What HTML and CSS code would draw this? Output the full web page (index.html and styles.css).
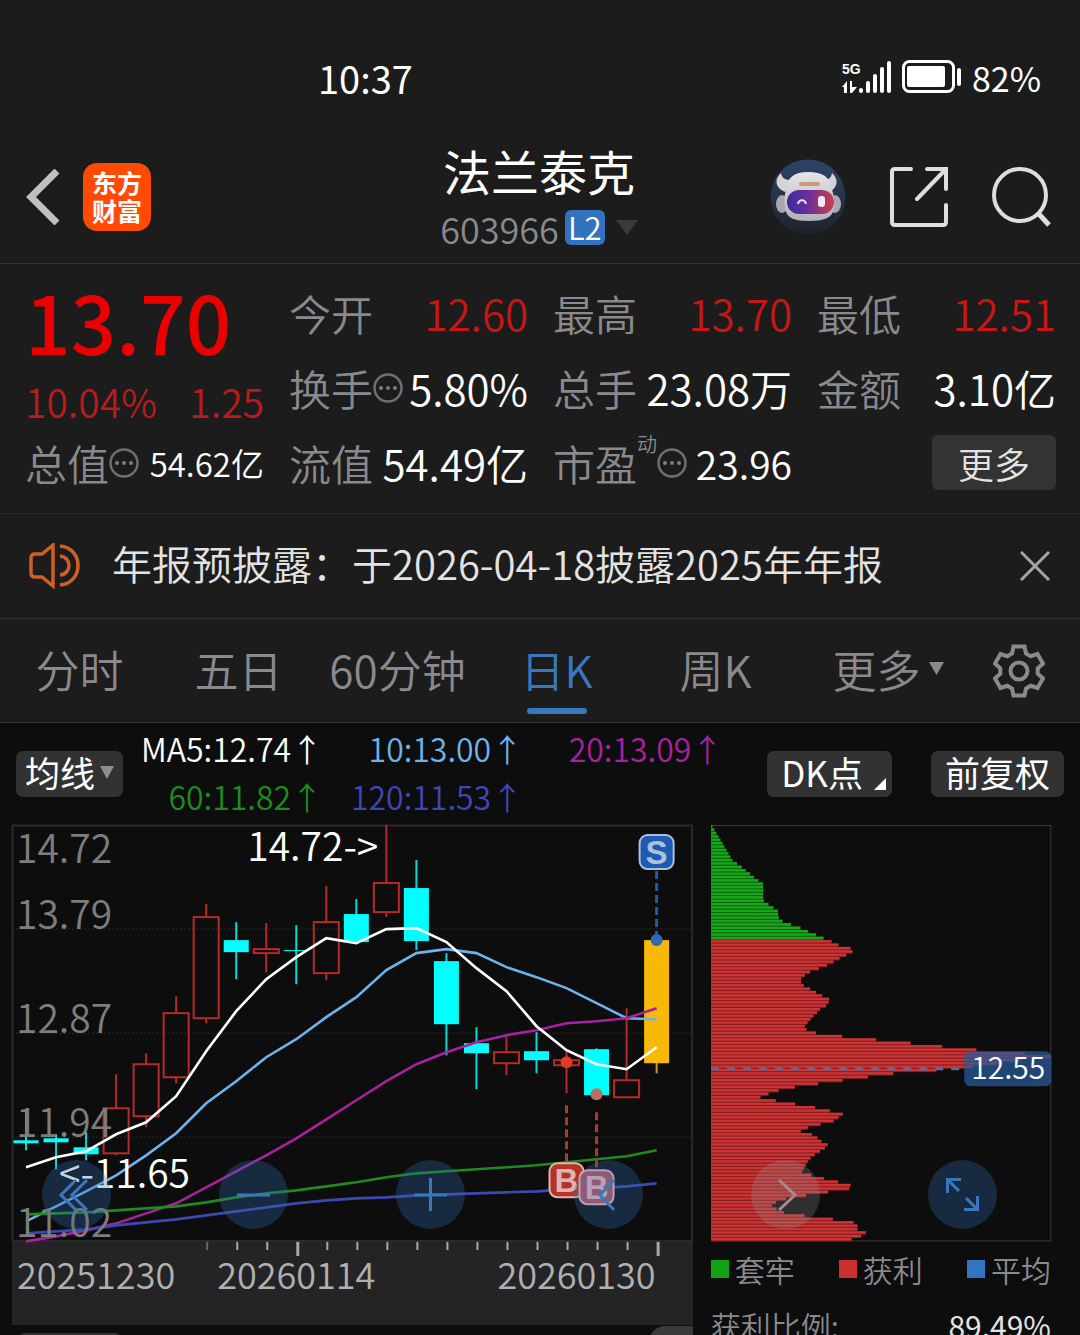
FILE: index.html
```html
<!DOCTYPE html>
<html lang="zh-CN">
<head>
    <meta charset="UTF-8">
    <meta name="viewport" content="width=device-width, initial-scale=1.0">
    <title>法兰泰克 603966</title>
    <link rel="stylesheet" href="styles.css">
</head>
<body>
    <div class="status-bar">
        <span class="time">10:37</span>
        <div class="status-icons">
            <svg width="50" height="34" viewBox="0 0 50 34" fill="#fff">
                <text x="0" y="14" class="net-label">5G</text>
                <path d="M0 27l5-6v12H2v-6zM8 21h2v6h5l-5 6H8z"/>
                <rect x="17" y="28" width="4" height="5" rx="2"/>
                <rect x="24" y="21" width="4" height="12" rx="2"/>
                <rect x="31" y="14" width="4" height="19" rx="2"/>
                <rect x="38" y="7" width="4" height="26" rx="2"/>
                <rect x="45" y="1" width="4" height="32" rx="2"/>
            </svg>
            <svg width="60" height="34" viewBox="0 0 60 34">
                <rect x="1.5" y="1.5" width="50" height="30" rx="6" fill="none" stroke="#fff" stroke-width="3"/>
                <rect x="5" y="6" width="38" height="21" rx="2" fill="#fff"/>
                <rect x="55" y="8" width="4" height="18" rx="2" fill="#fff"/>
            </svg>
            <span class="battery">82%</span>
        </div>
    </div>

    <div class="header">
        <div class="header-left">
            <button class="icon-button" aria-label="返回">
                <svg width="34" height="56" viewBox="0 0 34 56" fill="none" stroke="#c0c0c0" stroke-width="7">
                    <path d="M31 2L5 28l26 26"/>
                </svg>
            </button>
            <a class="logo" href="#">东方<br>财富</a>
        </div>
        <div class="title">
            <h1>法兰泰克</h1>
            <button class="code">
                603966<span class="badge">L2</span>
                <svg width="22" height="16" viewBox="0 0 22 16"><path d="M0 0h22L11 15z" fill="#3a3a3a"/></svg>
            </button>
        </div>
        <div class="header-right">
            <button class="icon-button" aria-label="助手">
                <svg width="76" height="76" viewBox="0 0 76 76">
                    <defs>
                        <linearGradient id="disc" x1="0" y1="0" x2="0" y2="1">
                            <stop offset="0" stop-color="#2f4468"/>
                            <stop offset="1" stop-color="#1f222b"/>
                        </linearGradient>
                        <linearGradient id="visor" x1="0" y1="0" x2="1" y2="0">
                            <stop offset="0" stop-color="#3b2c9c"/>
                            <stop offset="0.45" stop-color="#6a2f9c"/>
                            <stop offset="1" stop-color="#c9404e"/>
                        </linearGradient>
                        <linearGradient id="shell" x1="0" y1="0" x2="0" y2="1">
                            <stop offset="0" stop-color="#e6e4e8"/>
                            <stop offset="1" stop-color="#b4b0b8"/>
                        </linearGradient>
                    </defs>
                    <circle cx="38" cy="38" r="37.5" fill="url(#disc)"/>
                    <path d="M11 14c-7 6-6 15 4 19l8-13c-6 2-11 0-12-6zM62 14c7 6 6 15-3 19l-8-13c6 2 10 0 11-6z" fill="#d5d3d8"/>
                    <ellipse cx="12" cy="45" rx="6" ry="9" fill="#aaa7b0"/>
                    <ellipse cx="65" cy="45" rx="6" ry="9" fill="#aaa7b0"/>
                    <path d="M38 13c-14 0-20 5-22 17-2 8-2 14-1 20 2 9 9 12 24 12s23-3 25-12c1-6 0-12-2-20-2-12-9-17-24-17z" fill="url(#shell)"/>
                    <rect x="29" y="23" width="21" height="4" rx="2" fill="#c99b72"/>
                    <rect x="17" y="31" width="47" height="24" rx="12" fill="url(#visor)"/>
                    <path d="M28 45c1-5 7-5 8 0" fill="none" stroke="#dfe3ff" stroke-width="2"/>
                    <rect x="48" y="37" width="7" height="11" rx="3" fill="#f3e6f2"/>
                </svg>
            </button>
            <button class="icon-button" aria-label="分享">
                <svg width="58" height="60" viewBox="0 0 58 60" fill="none" stroke="#dedede" stroke-width="4" stroke-linecap="round">
                    <path d="M21 2H5q-3 0-3 3v50q0 3 3 3h48q3 0 3-3V38M37 2h19v20M56 2L27 32"/>
                </svg>
            </button>
            <button class="icon-button" aria-label="搜索">
                <svg width="60" height="62" viewBox="0 0 60 62" fill="none" stroke="#dedede" stroke-width="4">
                    <circle cx="28" cy="29" r="26"/>
                    <path d="M46 47l11 12" stroke-width="5"/>
                </svg>
            </button>
        </div>
    </div>

    <div class="quote">
        <div class="price">
            <div class="price-now">13.70</div>
            <div class="price-change"><span>10.04%</span><span>1.25</span></div>
        </div>
        <div class="cell"><span class="label">今开</span><span class="value up">12.60</span></div>
        <div class="cell"><span class="label">最高</span><span class="value up">13.70</span></div>
        <div class="cell"><span class="label">最低</span><span class="value up">12.51</span></div>
        <div class="cell"><span class="label">换手<svg class="info" viewBox="0 0 30 30"><use href="#dots"/></svg></span><span class="value">5.80%</span></div>
        <div class="cell"><span class="label">总手</span><span class="value">23.08万</span></div>
        <div class="cell"><span class="label">金额</span><span class="value">3.10亿</span></div>
        <div class="cell"><span class="label">总值<svg class="info" viewBox="0 0 30 30"><use href="#dots"/></svg></span><span class="value small">54.62亿</span></div>
        <div class="cell"><span class="label">流值</span><span class="value">54.49亿</span></div>
        <div class="cell"><span class="label">市盈<sup>动</sup><svg class="info" viewBox="0 0 30 30"><use href="#dots"/></svg></span><span class="value medium">23.96</span></div>
        <div class="cell cell-more"><button class="more">更多</button></div>
    </div>

    <div class="notice">
        <svg width="52" height="46" viewBox="0 0 52 46" fill="none" stroke="#cf5f22" stroke-width="3.5">
            <path d="M24 2v41L13 34H6q-4 0-4-4V15q0-4 4-4h7z"/>
            <path d="M31 3c24 2 24 37 0 39M31 13c12 1 12 18 0 19"/>
        </svg>
        <p>年报预披露：于2026-04-18披露2025年年报</p>
        <button class="icon-button" aria-label="关闭">
            <svg width="30" height="30" viewBox="0 0 30 30" stroke="#a5a5a5" stroke-width="3"><path d="M1 1l28 28M29 1L1 29"/></svg>
        </button>
    </div>

    <div class="tabs">
        <button class="tab">分时</button>
        <button class="tab">五日</button>
        <button class="tab">60分钟</button>
        <button class="tab active">日K</button>
        <button class="tab">周K</button>
        <button class="tab">更多<svg width="15" height="13" viewBox="0 0 15 13"><path d="M0 0h15L7.5 13z" fill="#8a898e"/></svg></button>
        <button class="settings" aria-label="设置">
            <svg width="52" height="54" viewBox="-26 -27 52 54" fill="none" stroke="#8a898e" stroke-width="4">
                <path d="M-5.500-24.500H5.500L7-17.500 11.700-14.800 18.500-17 24-7.500 18.700-2.700V2.700L24 7.500 18.500 17 11.700 14.800 7 17.500 5.500 24.500H-5.500L-7 17.500-11.700 14.800-18.500 17-24 7.500-18.700 2.700V-2.700L-24-7.500-18.500-17-11.700-14.800-7-17.500z"/>
                <circle r="8.500"/>
            </svg>
        </button>
    </div>

    <div class="toolbar">
        <button class="tool tool-ma">均线<svg width="14" height="13" viewBox="0 0 14 13"><path d="M0 0h14L7 13z" fill="#8e8e8e"/></svg></button>
        <div class="ma-list">
            <span class="ma5">MA5:12.74↑</span>
            <span class="ma10">10:13.00↑</span>
            <span class="ma20">20:13.09↑</span>
            <span class="ma60">60:11.82↑</span>
            <span class="ma120">120:11.53↑</span>
        </div>
        <button class="tool tool-dk">DK点<svg width="12" height="12" viewBox="0 0 12 12"><path d="M12 0v12H0z" fill="#fff"/></svg></button>
        <button class="tool">前复权</button>
    </div>

    <div class="charts">
        <div class="kline">
            <div class="plot">
                <svg id="kline" class="chart" viewBox="0 0 680 416"></svg>
                <div class="plot-buttons">
                    <button class="round" aria-label="快退"><svg viewBox="0 0 69 69"><path d="M34 20L19 35l15 15M45 20L30 35l15 15"/></svg></button>
                    <button class="round" aria-label="缩小"><svg viewBox="0 0 69 69"><path d="M18 35h33"/></svg></button>
                    <button class="round" aria-label="放大"><svg viewBox="0 0 69 69"><path d="M18 35h33M34.500 18v33"/></svg></button>
                    <button class="round" aria-label="后退"><svg viewBox="0 0 69 69"><path d="M40 20L26 35l14 15"/></svg></button>
                </div>
            </div>
            <svg id="axis" class="chart axis" viewBox="0 0 680 84"></svg>
            <div class="next-row"><div class="chip"></div><div class="chip-right"></div></div>
        </div>
        <div class="chips">
            <div class="plot">
                <svg id="chips" class="chart" viewBox="0 0 340 416"></svg>
                <div class="plot-buttons">
                    <button class="round gray" aria-label="前进"><svg viewBox="0 0 69 69"><path d="M28 20l16 15-16 15"/></svg></button>
                    <button class="round" aria-label="全屏"><svg viewBox="0 0 69 69"><path d="M19.500 33V19.500H33M20 20l11 11M49.500 36v13.500H36M49 49L38 38"/></svg></button>
                </div>
            </div>
            <div class="legend">
                <span><i class="green"></i>套牢</span>
                <span><i class="red"></i>获利</span>
                <span><i class="blue"></i>平均</span>
            </div>
            <div class="stat"><span>获利比例:</span><b>89.49%</b></div>
        </div>
    </div>

    <svg class="defs">
        <symbol id="dots" viewBox="0 0 30 30">
            <circle cx="15" cy="15" r="13.500" fill="none" stroke="#6f6f72" stroke-width="2.500"/>
            <g fill="#7c7c80"><circle cx="8" cy="15" r="2"/><circle cx="15" cy="15" r="2"/><circle cx="22" cy="15" r="2"/></g>
        </symbol>
    </svg>
    <script src="script.js"></script>
</body>
</html>
```

FILE: styles.css
```css
* {
    box-sizing: border-box;
}
body {
    margin: 0;
    height: 100vh;
    overflow: hidden;
    display: flex;
    flex-direction: column;
    background-color: #1c1c1c;
    color: #fff;
    font-family: "Noto Sans CJK SC", sans-serif;
    font-weight: 350;
}
button {
    font: inherit;
    color: inherit;
    background: none;
    border: none;
    padding: 0;
    cursor: pointer;
}
svg {
    display: block;
    flex: none;
}
.defs {
    position: absolute;
    width: 0;
    height: 0;
}
.status-bar {
    flex: none;
    height: 130px;
    padding: 24px 39px 0 318px;
    display: flex;
    justify-content: space-between;
    align-items: center;
    font-weight: 400;
}
.time {
    font-size: 38px;
}
.status-icons {
    display: flex;
    align-items: center;
    gap: 10px;
}
.status-icons svg {
    overflow: visible;
}
.net-label {
    font: bold 14px "Liberation Sans", sans-serif;
}
.battery {
    font-size: 34px;
}
.header {
    flex: none;
    height: 134px;
    padding: 0 28px 0 26px;
    display: grid;
    grid-template-columns: 1fr auto 1fr;
    align-items: center;
    border-bottom: 1px solid #333;
}
.header-left,
.header-right {
    display: flex;
    align-items: center;
}
.header-left {
    gap: 23px;
}
.header-right {
    justify-content: flex-end;
    gap: 44px;
}
.logo {
    width: 68px;
    height: 68px;
    padding-top: 5px;
    border-radius: 14px;
    background-color: #ff4a05;
    color: #fff;
    text-align: center;
    font-size: 25px;
    line-height: 28px;
    font-weight: 700;
    text-decoration: none;
}
.title {
    padding-top: 4px;
    text-align: center;
}
.title h1 {
    margin: 0;
    font-size: 48px;
    line-height: 58px;
    font-weight: 400;
}
.code {
    display: flex;
    align-items: center;
    height: 58px;
    color: #8a898e;
    font-size: 36px;
}
.badge {
    width: 40px;
    height: 35px;
    margin: 0 11px 0 6px;
    border-radius: 6px;
    background-color: #3273bf;
    color: #fff;
    font-size: 31px;
    line-height: 34px;
}
.quote {
    flex: none;
    padding: 11px 24px 13px 25px;
    display: grid;
    grid-template-columns: repeat(4, minmax(0, 1fr));
    grid-auto-rows: 75px;
    column-gap: 25px;
    border-bottom: 1px solid #2b2b2b;
}
.price {
    grid-row: span 2;
    color: #eb0000;
}
.price-now {
    font-size: 80px;
    line-height: 90px;
    font-weight: 500;
}
.price-change {
    display: flex;
    justify-content: space-between;
    color: #b91a1a;
    font-size: 39px;
    line-height: 72px;
}
.cell {
    display: flex;
    justify-content: space-between;
    align-items: center;
    white-space: nowrap;
    font-size: 42px;
}
.label {
    display: flex;
    align-items: center;
    color: #8a898e;
}
.label sup {
    align-self: flex-start;
    font-size: 20px;
    line-height: 24px;
}
.info {
    width: 30px;
    height: 30px;
}
.value.up {
    color: #c41717;
}
.value.medium {
    font-size: 39px;
}
.value.small {
    font-size: 33px;
}
.cell-more {
    justify-content: flex-end;
}
.more {
    width: 124px;
    height: 55px;
    border-radius: 6px;
    background-color: #333;
    color: #e3e3e3;
    font-size: 36px;
    line-height: 50px;
}
.notice {
    flex: none;
    height: 105px;
    padding: 0 30px 0 29px;
    display: flex;
    align-items: center;
    gap: 31px;
    border-bottom: 1px solid #333;
}
.notice p {
    flex: 1;
    margin: 0;
    padding-bottom: 6px;
    color: #e3e3e3;
    font-size: 40px;
}
.tabs {
    flex: none;
    height: 104px;
    display: grid;
    grid-template-columns: repeat(5, 159fr) 186fr 99fr;
    border-bottom: 1px solid #333;
}
.tab {
    display: flex;
    align-items: center;
    justify-content: center;
    gap: 8px;
    position: relative;
    padding-bottom: 4px;
    color: #8a898e;
    font-size: 44px;
}
.tab.active {
    color: #3a78bd;
}
.tab.active::after {
    content: "";
    position: absolute;
    bottom: 8px;
    width: 60px;
    height: 6px;
    border-radius: 3px;
    background-color: #3a78bd;
}
.settings {
    padding-left: 12px;
}
.toolbar {
    flex: none;
    height: 102px;
    padding: 0 16px;
    display: flex;
    align-items: center;
    background-color: #0d0d0d;
}
.tool {
    display: flex;
    align-items: center;
    height: 46px;
    padding: 0 14px 4px;
    border-radius: 7px;
    background-color: #323232;
    font-size: 35px;
    line-height: 42px;
    font-weight: 400;
}
.tool-ma {
    padding: 0 9px 4px;
    gap: 5px;
}
.tool-dk {
    margin-right: 39px;
    padding-right: 6px;
    gap: 11px;
}
.tool-dk svg {
    align-self: flex-end;
    margin-bottom: 3px;
}
.ma-list {
    flex: 1;
    margin-right: 44px;
    padding-bottom: 4px;
    display: grid;
    grid-template-columns: repeat(3, 1fr);
    justify-items: end;
    font-size: 32px;
    line-height: 48px;
    white-space: nowrap;
}
.ma10 {
    color: #6cb3ec;
}
.ma20 {
    color: #a8219f;
}
.ma60 {
    color: #1f8a1f;
}
.ma120 {
    color: #3d48b3;
}
.charts {
    flex: 1;
    padding: 0 29px 0 12px;
    display: grid;
    grid-template-columns: 2fr 1fr;
    align-items: start;
    column-gap: 18px;
    background-color: #0d0d0d;
}
.plot {
    position: relative;
}
.chart {
    width: 100%;
    height: auto;
    overflow: visible;
}
.axis {
    background-color: #242426;
}
.chart text {
    font-size: 39px;
}
.chart .date {
    fill: #b0b0b0;
    font-size: 36px;
}
.chart .scale {
    fill: #7d7d7d;
}
.chart .mark {
    font: bold 33px "Liberation Sans", sans-serif;
    text-anchor: middle;
}
.chart .tag {
    fill: #fff;
    font-size: 30px;
    text-anchor: middle;
}
.plot-buttons {
    position: absolute;
    left: 30px;
    right: 50px;
    bottom: 12px;
    display: flex;
    justify-content: space-between;
}
.chips .plot-buttons {
    left: 40px;
    right: 54px;
}
.round {
    width: 69px;
    height: 69px;
    border-radius: 50%;
    background-color: rgba(50, 110, 180, 0.3);
}
.round svg {
    fill: none;
    stroke: #3a78bd;
    stroke-width: 3;
}
.round.gray {
    background-color: rgba(150, 150, 150, 0.25);
}
.round.gray svg {
    stroke: #a08e8e;
}
.next-row {
    display: flex;
    justify-content: space-between;
    align-items: flex-start;
    padding: 1px 0 0 6px;
}
.chip {
    width: 104px;
    height: 46px;
    margin-top: 7px;
    border-radius: 7px;
    background-color: #323232;
}
.chip-right {
    width: 44px;
    height: 60px;
    border-radius: 16px 0 0 0;
    background-color: #3a3a3a;
}
.legend,
.stat {
    display: flex;
    justify-content: space-between;
    align-items: center;
    color: #8a898e;
    font-size: 30px;
    line-height: 56px;
}
.legend span {
    display: flex;
    align-items: center;
    gap: 6px;
}
.legend i {
    width: 18px;
    height: 18px;
}
.green {
    background-color: #12a312;
}
.red {
    background-color: #cb3030;
}
.blue {
    background-color: #3174c2;
}
.stat b {
    color: #e3e3e3;
    font-weight: 400;
}
```

FILE: script.js
```javascript
const STEP = 30;
const FIRST = 14;

// [high, body top, body bottom, low, kind] in chart units
const candles = [
    [287, 315, 318, 325, 'down'], [309, 313, 317, 344, 'down'], [307, 322, 329, 335, 'down'],
    [249, 283, 328, 330, 'up'], [228, 239, 291, 302, 'up'], [171, 188, 252, 258, 'up'],
    [79, 92, 193, 198, 'up'], [97, 115, 127, 154, 'down'], [98, 124, 128, 147, 'up'],
    [100, 125, 126, 159, 'down'], [61, 97, 148, 155, 'up'], [74, 89, 117, 117, 'down'],
    [0, 58, 87, 92, 'up'], [35, 63, 116, 125, 'down'], [128, 136, 199, 230, 'down'],
    [202, 218, 228, 264, 'down'], [211, 227, 238, 250, 'up'], [207, 226, 235, 248, 'down'],
    [225, 235, 240, 268, 'up'], [223, 224, 270, 274, 'down'], [183, 255, 272, 273, 'up'],
    [115, 115, 238, 248, 'limit']
];

const lines = [
    ['#6cb3ec', [396, 381, 366, 350, 330, 308, 278, 256, 232, 214, 192, 172, 145, 128, 124, 128, 142, 152, 163, 178, 193, 194]],
    ['#a8219f', [416, 411, 405, 398, 388, 378, 362, 346, 330, 313, 294, 275, 256, 239, 227, 217, 210, 205, 198, 196, 193, 183]],
    ['#1f8a1f', [389, 388, 387, 385, 383, 381, 377, 372, 368, 365, 361, 357, 352, 348, 346, 344, 342, 340, 337, 334, 331, 325]],
    ['#3d48b3', [408, 406, 404, 400, 397, 394, 390, 386, 382, 378, 375, 373, 372, 370, 369, 368, 367, 366, 364, 363, 361, 358]],
    ['#ffffff', [342, 332, 326, 309, 297, 271, 226, 186, 154, 132, 113, 118, 104, 103, 117, 143, 166, 201, 225, 239, 244, 222]]
];

// chip distribution, thirds of a unit, from the top price down
const chips = [
    4, 10, 16, 22, 28, 34, 40, 46, 52, 58, 64, 78, 92, 104, 117, 129, 142, 156, 156, 157, 156, 156,
    158, 172, 187, 200, 201, 203, 214, 240, 268, 291, 315, 337, 361, 382, 418, 424, 405, 385, 367,
    348, 323, 297, 281, 270, 270, 278, 297, 315, 333, 354, 352, 345, 327, 318, 307, 298, 289, 281,
    286, 315, 393, 495, 598, 692, 795, 940, 1018, 930, 868, 787, 675, 546, 470, 394, 321, 251, 202,
    172, 148, 194, 252, 312, 356, 395, 382, 367, 328, 290, 269, 303, 319, 331, 349, 341, 326, 311,
    298, 290, 284, 278, 272, 300, 339, 381, 418, 414, 351, 285, 225, 195, 182, 196, 218, 280, 365,
    427, 439, 439, 464, 450, 421
];
const TRAPPED = 34;

function rect(x, y, w, h, rest) {
    return `<rect x="${x}" y="${y}" width="${w}" height="${h}" ${rest}/>`;
}

function candle([high, top, bottom, low, kind], i) {
    const x = FIRST + i * STEP;
    if (kind === 'up') {
        return `<path d="M${x} ${high}V${top}M${x} ${bottom}V${low}" stroke="#b52a2a" stroke-width="2"/>` +
            rect(x - 12.5, top, 25, bottom - top, 'fill="none" stroke="#b52a2a" stroke-width="2"');
    }
    const color = kind === 'limit' ? '#f7b905' : '#00ffff';
    return rect(x - 1, high, 2, low - high, `fill="${color}" opacity="0.85"`) +
        rect(x - 12.5, top, 25, bottom - top, `fill="${color}"`);
}

function mark(x, y, letter, fill, color) {
    return rect(x - 17, y - 17, 34, 34, `rx="8" fill="${fill}" stroke="${color}" stroke-width="2"`) +
        `<text class="mark" x="${x}" y="${y + 12}" fill="${color}">${letter}</text>`;
}

function drawKline() {
    let out = rect(0.5, 0.5, 679, 415, 'fill="none" stroke="#2a2a2a" stroke-width="2"');
    [104, 208, 312].forEach(y => {
        out += `<path d="M0 ${y}H680" stroke="#2c2c2c" stroke-dasharray="2 2"/>`;
    });
    out += candles.map(candle).join('');
    lines.forEach(([color, ys]) => {
        const points = ys.map((y, i) => `${FIRST + i * STEP},${y}`).join(' ');
        out += `<polyline points="${points}" fill="none" stroke="${color}" stroke-width="2.6"/>`;
    });
    [['14.72', 38], ['13.79', 104], ['12.87', 208], ['11.94', 312], ['11.02', 412]].forEach(([t, y]) => {
        out += `<text class="scale" x="4" y="${y}">${t}</text>`;
    });
    out += '<text x="235" y="36" fill="#fff">14.72-&gt;</text>';
    out += '<text x="47" y="363" fill="#fff">&lt;-11.65</text>';
    out += '<path d="M644 46V112" stroke="#2259a8" stroke-width="3" stroke-dasharray="8 4"/>';
    out += '<circle cx="644" cy="115" r="6" fill="#2c68b5"/>';
    out += '<path d="M554 280V336M584 287V342" stroke="#a83c30" stroke-width="3" stroke-dasharray="8 4"/>';
    out += '<circle cx="554" cy="237" r="6" fill="#e23a24"/><circle cx="584" cy="269" r="6" fill="#b9705f"/>';
    out += mark(644, 27, 'S', '#1c5bb2', '#aebfdc');
    out += mark(554, 355, 'B', '#b53426', '#e0b4b0');
    out += mark(584, 362, 'B', '#b8525a', '#f0b8b6');
    document.getElementById('kline').innerHTML = out;
}

function drawAxis() {
    let out = '';
    for (let x = 195; x <= 645; x += STEP) {
        const major = x === 285 || x === 645;
        out += rect(x - 1, 0, major ? 3 : 2, major ? 15 : 9, `fill="${x === 195 ? '#666' : '#a8a8a8'}"`);
    }
    [['20251230', 5], ['20260114', 205], ['20260130', 485]].forEach(([t, x]) => {
        out += `<text class="date" x="${x}" y="48">${t}</text>`;
    });
    document.getElementById('axis').innerHTML = out;
}

function drawChips() {
    const pitch = 416 / chips.length;
    let out = rect(0.5, 0.5, 339, 415, 'fill="none" stroke="#3a3a3a"');
    chips.forEach((value, i) => {
        const y = i * pitch;
        const trapped = i < TRAPPED;
        out += rect(0, y, value / 3, pitch, `fill="${trapped ? '#0a6a0c' : '#8c1c1e'}"`);
        out += rect(0, y, value / 3, 2.4, `fill="${trapped ? '#1aa51a' : '#c93434'}"`);
    });
    out += '<path d="M0 243.500H254" stroke="#5b6aa5" stroke-width="3" stroke-dasharray="8 8"/>';
    out += rect(253, 226, 87, 35, 'rx="6" fill="#285a98" fill-opacity="0.75"');
    out += '<text class="tag" x="297" y="254">12.55</text>';
    document.getElementById('chips').innerHTML = out;
}

drawKline();
drawAxis();
drawChips();
```
